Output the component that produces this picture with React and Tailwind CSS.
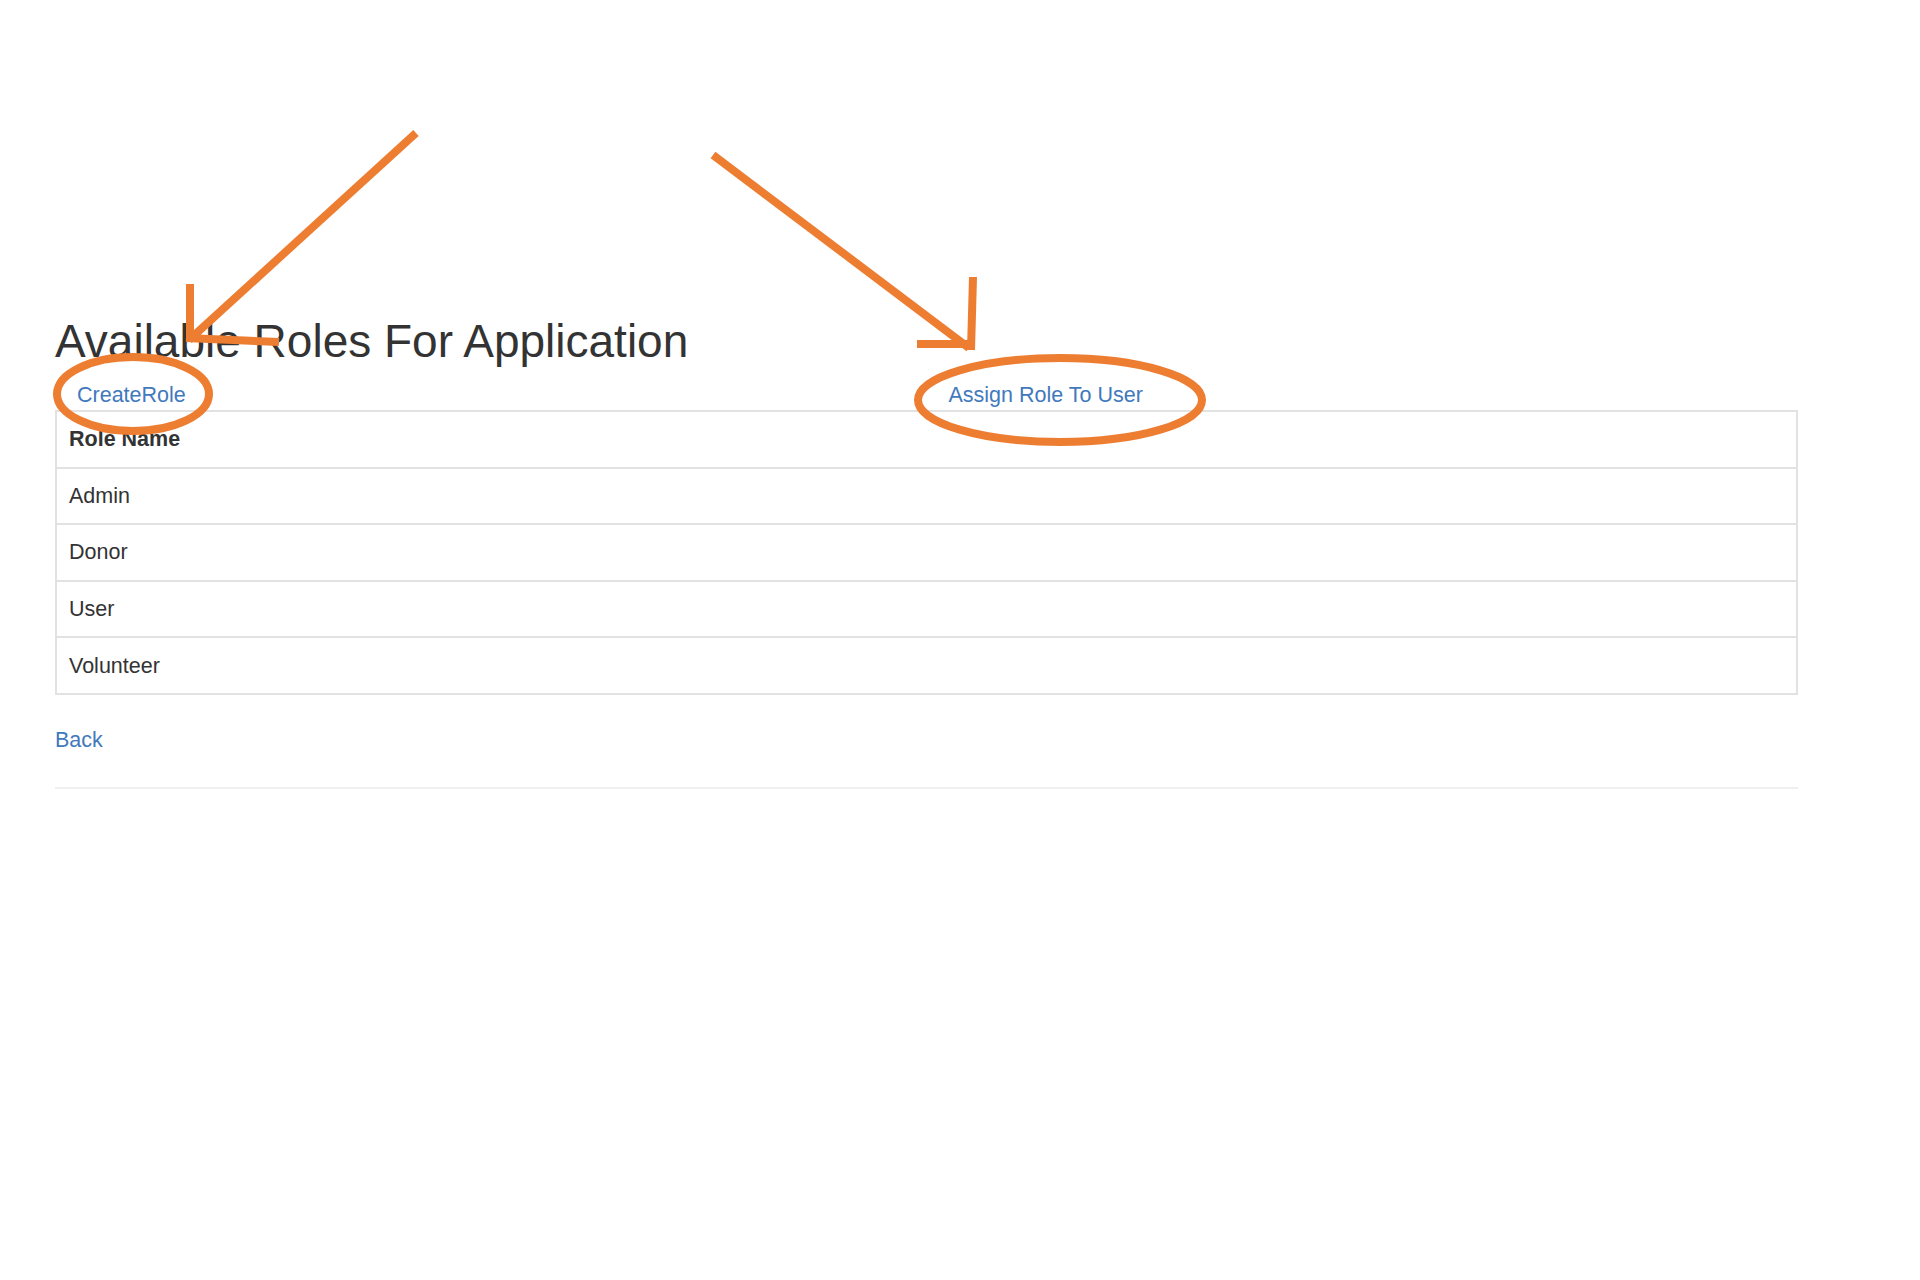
import React from "react";

const roles = ["Admin", "Donor", "User", "Volunteer"];

function Annotations() {
  // hand-drawn orange callouts laid over the page
  const c = "#ED7D31";
  return (
    <svg className="pointer-events-none absolute left-0 top-0" width="1920" height="1280" viewBox="0 0 1920 1280" fill="none">
      <g stroke={c} strokeWidth="8" strokeLinecap="butt">
        <line x1="416" y1="133" x2="189" y2="340" />
        <line x1="190" y1="284" x2="190" y2="342" />
        <line x1="186" y1="338" x2="279" y2="342" />
        <ellipse cx="133" cy="394" rx="76" ry="37" />

        <line x1="713" y1="155" x2="969" y2="348" />
        <line x1="973" y1="277" x2="971" y2="350" />
        <line x1="917" y1="344" x2="973" y2="344" />
        <ellipse cx="1060" cy="400" rx="142" ry="42" />
      </g>
    </svg>
  );
}

export default function App() {
  return (
    <div className="relative h-[1280px] w-[1920px] overflow-hidden bg-white font-['Liberation_Sans',Arial,sans-serif] text-[21.5px] leading-[30px] text-[#333333]">
      <div className="ml-[55px] w-[1743px] pt-[316px]">
        <h2 className="mb-[14px] text-[46px] font-normal leading-[50px] text-[#333333]">Available Roles For Application</h2>

        <div className="grid grid-cols-2">
          <div className="px-[22px]">
            <a className="text-[#4179bd]">CreateRole</a>
          </div>
          <div className="px-[22px]">
            <a className="text-[#4179bd]">Assign Role To User</a>
          </div>
        </div>

        <div className="border-x-2 border-b-2 border-[#e2e2e2]">
          <div className="border-t-2 border-[#e2e2e2] px-[12px] py-[12.3px] font-bold">Role Name</div>
          {roles.map((r) => (
            <div key={r} className="border-t-2 border-[#e2e2e2] px-[12px] py-[12.3px]">{r}</div>
          ))}
        </div>

        <div className="mt-[30px]">
          <a className="text-[#4179bd]">Back</a>
        </div>

        <div className="mt-[32px] border-t-2 border-[#efefef]" />
      </div>

      <Annotations />
    </div>
  );
}
